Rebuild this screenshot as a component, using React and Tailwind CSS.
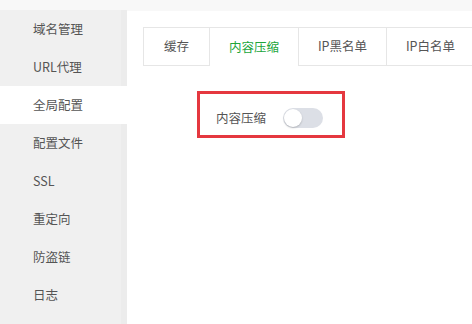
import React from 'react';

const menu = ['域名管理', 'URL代理', '全局配置', '配置文件', 'SSL', '重定向', '防盗链', '日志'];
const tabs = [
  { name: '缓存', w: 'w-[65px]' },
  { name: '内容压缩', w: 'w-[89px]' },
  { name: 'IP黑名单', w: 'w-[88px]' },
  { name: 'IP白名单', w: 'w-[88px]' },
];

export default function App() {
  const active = 2;
  const activeTab = 1;

  return (
    <div className="w-[472px] h-[324px] overflow-hidden bg-[#f8f8f8] pt-[10px] text-[12.5px] text-[#555] font-['Noto_Sans_CJK_SC','Noto_Sans',sans-serif]">
      <div className="flex h-full">
        {/* Sidebar */}
        <div className="w-[127px] shrink-0 bg-[#f0f0f0] border-r-[6px] border-[#ececec]">
          {menu.map((item, i) => (
            <div
              key={item}
              className={`h-[38px] flex items-center pl-[33px] ${i === active ? 'bg-white -mr-[6px]' : ''}`}
            >
              {item}
            </div>
          ))}
        </div>

        {/* Main */}
        <div className="flex-1 bg-white mt-px pt-[16px] pl-[16px]">
          <div className="flex h-[39px] border border-r-0 border-[#e6e6e6] w-max">
            {tabs.map((t, i) => (
              <div
                key={t.name}
                className={`${t.w} shrink-0 flex items-center justify-center ${i > 0 ? 'border-l border-[#e6e6e6]' : ''} ${
                  i === activeTab ? 'text-[#20a53a] bg-white -mb-px' : ''
                }`}
              >
                {t.name}
              </div>
            ))}
          </div>

          <div className="mt-[25px] ml-[54px] w-[148px] border-[3px] border-[#e5383f] pt-[14px] pb-[7px] pl-[16px] flex items-center">
            <span className="leading-[20px]">内容压缩</span>
            <div className="ml-[17px] w-[40px] h-[20px] rounded-full bg-[#dcdfe6] p-px">
              <div className="w-[18px] h-[18px] rounded-full bg-white shadow-[0_1px_2px_rgba(0,0,0,0.2)]" />
            </div>
          </div>
        </div>
      </div>
    </div>
  );
}
